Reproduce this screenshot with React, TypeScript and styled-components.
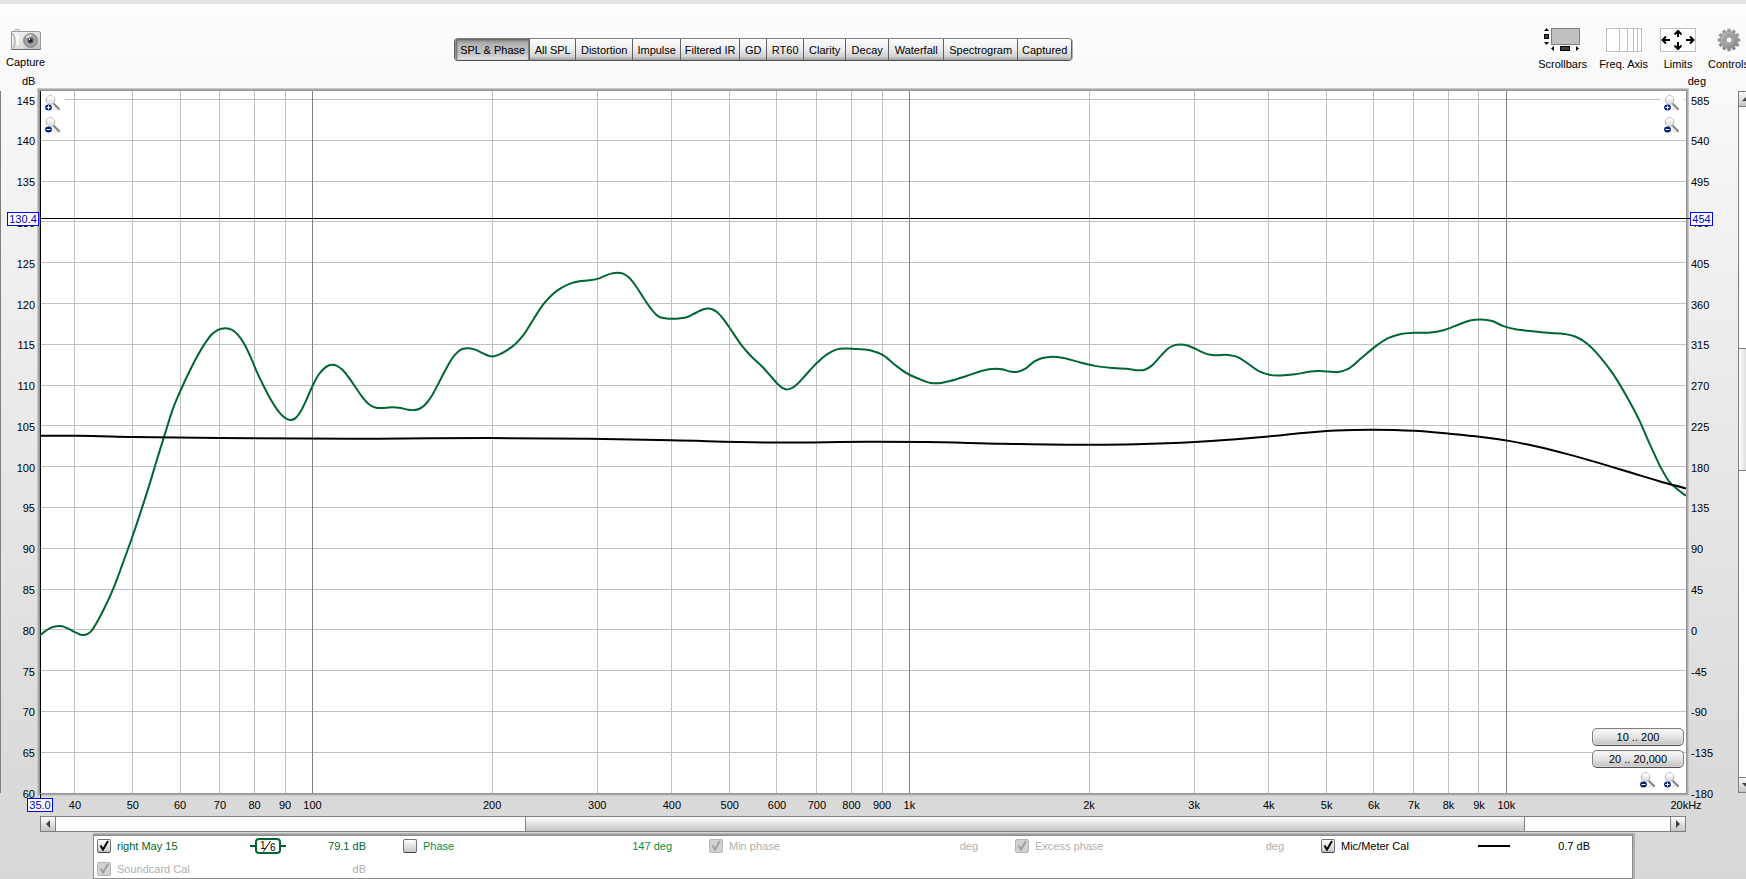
import React from "react";
import styled, { createGlobalStyle, css } from "styled-components";

const GlobalStyle = createGlobalStyle`
  *, *::before, *::after { box-sizing: border-box; }
  html, body { margin: 0; padding: 0; }
  body {
    font: 11px/14px "Liberation Sans", Arial, sans-serif;
    color: #000;
    overflow: hidden;
  }
  button, input { font: inherit; color: inherit; margin: 0; padding: 0; }
`;

/* ---------- scales ---------- */

const F_MIN = 34.96;
const F_MAX = 20000;
const DB_TOP = 146.05;
const DB_BOTTOM = 60;

const freqRatio = (hz: number) => Math.log(hz / F_MIN) / Math.log(F_MAX / F_MIN);
const dbRatio = (db: number) => (DB_TOP - db) / (DB_TOP - DB_BOTTOM);

/* The traces are drawn in view units of the plot. */
const VIEW = { x: 36, y: 162, w: 1478, h: 1254 };

const dbTicks = Array.from({ length: 18 }, (_, i) => 145 - i * 5);
const freqLines = [
  40, 50, 60, 70, 80, 90, 100, 200, 300, 400, 500, 600, 700, 800, 900, 1000, 2000, 3000, 4000,
  5000, 6000, 7000, 8000, 9000, 10000,
];
const freqTicks = [
  ...freqLines.map((hz) => ({ hz, text: hz < 1000 ? `${hz}` : `${hz / 1000}k` })),
  { hz: 20000, text: "20kHz" },
];
const decades = [100, 1000, 10000];

type Point = [number, number];

/* Low band, sampled on a finer raster than the rest of the trace. */
const lowBand: Point[] = [
  [0, 1128], [10, 1116], [20, 1106], [30, 1101], [40, 1100], [50, 1103], [60, 1110], [70, 1118],
  [80, 1125], [88, 1127], [95, 1124], [103, 1115], [113, 1092], [130, 1044], [148, 985],
  [166, 913], [186, 830], [205, 745], [220, 675], [235, 600], [250, 528], [267, 448], [285, 384],
  [300, 336], [315, 292], [332, 250], [345, 224], [358, 210], [373, 205], [386, 210], [398, 225],
  [412, 256], [425, 297], [437, 340], [450, 380], [463, 417], [476, 448], [488, 469], [498, 479],
  [505, 480.5], [513, 476], [522, 460], [535, 422], [548, 378], [560, 345], [572, 325],
  [580, 317], [588, 315], [597, 318], [608, 330], [622, 356], [635, 384], [648, 412], [660, 432],
  [668, 440], [676, 444], [685, 445], [708, 442.5], [725, 445], [740, 450], [752, 451],
  [763, 447], [774, 435], [788, 407], [802, 368], [818, 322], [833, 287], [845, 270], [858, 265],
  [872, 268], [888, 279], [900, 287], [909, 290], [920, 286], [940, 270], [955, 253], [972, 225],
  [992, 178], [1012, 133], [1030, 104], [1048, 84], [1066, 71], [1082, 65], [1105, 61],
  [1122, 56], [1135, 48], [1148, 41], [1160, 38.5], [1172, 41], [1184, 53], [1198, 79],
  [1214, 116], [1228, 146], [1240, 166], [1248, 173], [1256, 175], [1288, 175], [1300, 172],
  [1313, 163], [1326, 153], [1334, 148], [1343, 146], [1352, 149], [1362, 158], [1376, 182],
  [1392, 217], [1410, 256], [1428, 287], [1450, 318], [1470, 351], [1485, 376], [1493, 385],
  [1501, 389], [1510, 386], [1522, 373], [1540, 344], [1560, 312],
];

const highBand: Point[] = [
  [743, 632], [751, 624], [760, 622], [770, 623], [783, 626], [793, 634], [803, 650], [814, 666],
  [825, 676], [835, 683], [843, 684], [853, 680], [868, 671], [880, 663], [888, 659], [894, 658],
  [900, 659], [907, 663], [913, 664], [920, 659], [929, 645], [936, 639], [943, 637], [955, 639],
  [970, 647], [983, 653], [1000, 657], [1015, 659], [1022, 661], [1028, 660], [1034, 653],
  [1042, 636], [1049, 622], [1055, 616], [1060, 615], [1067, 617], [1075, 624], [1084, 632],
  [1091, 634], [1103, 633.5], [1111, 637], [1120, 648], [1131, 663], [1140, 669], [1150, 670],
  [1163, 668], [1174, 664], [1183, 662], [1192, 663], [1202, 664], [1210, 659], [1222, 640],
  [1234, 620], [1246, 604], [1258, 596], [1270, 594], [1285, 593.5], [1297, 589], [1310, 579],
  [1320, 572], [1330, 570], [1340, 573], [1350, 582], [1362, 588], [1376, 591], [1390, 594],
  [1405, 596], [1415, 601], [1425, 613], [1436, 635], [1448, 666], [1460, 705], [1472, 750],
  [1482, 795], [1492, 837], [1499, 860], [1506, 873], [1514, 885],
];

const splTrace: Point[] = [
  ...lowBand.map(([x, y]): Point => [36 + x * 0.4467, 463.8 + y * 0.5946]),
  ...highBand,
];

const calTrace: Point[] = [
  [36, 778], [70, 778], [119, 780], [197, 782], [340, 783], [441, 782], [530, 783], [603, 786],
  [698, 790], [780, 788.5], [830, 789], [900, 792], [980, 794], [1020, 793], [1073, 789],
  [1110, 784], [1139, 779], [1170, 773], [1200, 768.5], [1232, 767], [1270, 769], [1300, 774],
  [1330, 780], [1355, 787], [1380, 797], [1410, 812], [1440, 829], [1465, 844], [1490, 859],
  [1514, 872],
];

/* Cubic Hermite curve through the samples; each slope is that of the parabola
   through a sample and its two neighbours, so uneven spacing stays smooth. */
function smoothPath(points: Point[]): string {
  const last = points.length - 1;
  const chord = (i: number) =>
    (points[i + 1][1] - points[i][1]) / (points[i + 1][0] - points[i][0]);
  const slopes = points.map((p, i) => {
    if (i === 0) return chord(0);
    if (i === last) return chord(last - 1);
    const before = p[0] - points[i - 1][0];
    const after = points[i + 1][0] - p[0];
    return (chord(i - 1) * after + chord(i) * before) / (before + after);
  });
  let d = `M${points[0][0]} ${points[0][1]}`;
  for (let i = 0; i < last; i++) {
    const [x1, y1] = points[i];
    const [x2, y2] = points[i + 1];
    const h = (x2 - x1) / 3;
    d += `C${x1 + h} ${y1 + slopes[i] * h} ${x2 - h} ${y2 - slopes[i + 1] * h} ${x2} ${y2}`;
  }
  return d;
}

/* ---------- frame ---------- */

const Page = styled.div`
  overflow: hidden;
  min-height: 100vh;
  display: flex;
  background: linear-gradient(#fdfdfd, #f0f0f0 30%, #dadada 88%, #d8d8d8);
`;

/* The window runs a little past the right edge of the view. */
const Frame = styled.main`
  flex: none;
  width: calc(100% + 8px);
  display: flex;
  flex-direction: column;
  border-top: 4px solid #e5e5e5;
`;

const Header = styled.header`
  display: flex;
  align-items: flex-start;
  height: 69px;
  padding: 24px 5px 0 6px;
`;

const ToolButton = styled.button`
  display: flex;
  flex-direction: column;
  align-items: center;
  gap: 5px;
  border: 0;
  background: none;
  white-space: nowrap;
  svg { display: block; }
`;

const Tools = styled.div`
  display: flex;
  gap: 12px;
`;

const TabArea = styled.nav`
  flex: 1;
  display: flex;
  justify-content: center;
  padding: 10px 57px 0 0;
`;

const TabGroup = styled.div`
  display: flex;
  height: 23px;
  border: 1px solid #606060;
  border-top-color: #808080;
  border-bottom-color: #505050;
  border-radius: 4px;
  overflow: hidden;
  box-shadow: 1px 0 0 #b0b0b0;
`;

const Tab = styled.button<{ $active?: boolean; $width: number }>`
  width: ${(p) => p.$width}px;
  border: 0;
  border-left: 1px solid #606060;
  white-space: nowrap;
  background: linear-gradient(#fdfdfd, #ececec 50%, #cfcfcf 85%, #9a9a9a);
  &:first-child { border-left-color: #909090; }
  ${(p) =>
    p.$active &&
    css`
      background: linear-gradient(#8a8a8a, #b4b4b4 25%, #c4c4c4 70%, #e6e6e6);
      box-shadow: inset 1px 1px 2px #606060, inset -1px 0 1px #808080;
    `}
`;

const Units = styled.div`
  display: flex;
  justify-content: space-between;
  height: 18px;
  line-height: 16px;
  padding: 0 48px 0 22px;
`;

/* ---------- chart ---------- */

const Chart = styled.section`
  flex: 1;
  display: grid;
  grid-template-columns: 40px minmax(0, 1fr) 52px 16px;
  grid-template-rows: minmax(400px, 1fr) 23px 16px;
`;

const Scale = styled.div<{ $side: "left" | "right" }>`
  position: relative;
  ${(p) => p.$side === "left" && css`border-left: 1px solid #808080;`}
`;

const ScaleTick = styled.span<{ $side: "left" | "right" }>`
  position: absolute;
  ${(p) => (p.$side === "left" ? "right: 5px;" : "left: 5px;")}
  line-height: 14px;
  margin-top: 1px;
  transform: translateY(-50%);
  white-space: nowrap;
`;

const readout = css`
  position: absolute;
  z-index: 2;
  height: 14px;
  line-height: 12px;
  border: 1px solid #0000ff;
  background: #fff;
  color: #0000cc;
  text-align: center;
`;

const LevelReadout = styled.output<{ $side: "left" | "right" }>`
  ${readout}
  ${(p) => (p.$side === "left" ? "right: 1px; width: 32px;" : "left: 4px; width: 23px;")}
  transform: translateY(-50%);
`;

const FreqReadout = styled.output`
  ${readout}
  left: 0;
  top: 5px;
  width: 26px;
  transform: translateX(-50%);
  &::before {
    content: "";
    position: absolute;
    left: 50%;
    bottom: 100%;
    height: 5px;
    border-left: 1px solid #000;
  }
`;

const Plot = styled.div`
  position: relative;
  z-index: 1;
  min-width: 0;
  background: #fff;
  box-shadow: inset 1px 0 0 #000, 0 0 0 1px #969696, 0 0 0 2px #a8a8a8, 0 0 0 3px #c8c8c8;
`;

const PlotDrawing = styled.svg`
  position: absolute;
  inset: 0;
  width: 100%;
  height: 100%;
  path, line { vector-effect: non-scaling-stroke; fill: none; }
  line { shape-rendering: crispEdges; }
`;

const CursorLine = styled.div`
  position: absolute;
  left: 0;
  right: -4px;
  margin-top: -1px;
  border-top: 1px solid #000;
`;

const Corner = styled.div<{ $at: "topLeft" | "topRight" | "bottomRight" }>`
  position: absolute;
  display: flex;
  flex-direction: column;
  align-items: flex-end;
  ${(p) => p.$at === "topLeft" && "left: 1px; top: 1px;"}
  ${(p) => p.$at === "topRight" && "right: 2px; top: 1px;"}
  ${(p) => p.$at === "bottomRight" && "right: 2px; bottom: 5px; gap: 4px;"}
`;

const ZoomRow = styled.div`
  display: flex;
  height: 16px;
`;

const ZoomButton = styled.button`
  display: grid;
  place-items: center;
  width: 24px;
  height: 22px;
  border: 0;
  background: #fff;
  ${ZoomRow} & { height: 16px; }
  svg { display: block; }
`;

const RangeButton = styled.button`
  width: 92px;
  height: 18px;
  border: 1px solid #808080;
  border-bottom-color: #505050;
  border-radius: 5px;
  background: linear-gradient(#fafafa, #e4e4e4 50%, #c0c0c0);
  box-shadow: inset 0 0 0 1px #e8e8e880;
`;

const FreqScale = styled.div`
  grid-column: 2;
  position: relative;
`;

const FreqTick = styled.span`
  position: absolute;
  top: 5px;
  transform: translateX(-50%);
  white-space: nowrap;
`;

/* ---------- scroll bars ---------- */

const HScroll = styled.div`
  grid-column: 2;
  display: grid;
  grid-template-columns: 15px minmax(0, 1fr) 15px;
  border: 1px solid #808080;
  background: #fff;
`;

const VScroll = styled.div`
  grid-column: 4;
  grid-row: 1;
  display: grid;
  grid-template-rows: 15px minmax(0, 1fr) 15px;
  border: 1px solid #808080;
  background: #fff;
`;

const ScrollButton = styled.button`
  display: grid;
  place-items: center;
  border: 0 solid #808080;
  background: linear-gradient(#fdfdfd, #c4c4c4);
  ${HScroll} &:first-child { border-right-width: 1px; }
  ${HScroll} &:last-child { border-left-width: 1px; }
  ${VScroll} &:first-child { border-bottom-width: 1px; }
  ${VScroll} &:last-child { border-top-width: 1px; }
  svg { display: block; }
`;

const HTrack = styled.div`
  display: grid;
  grid-template-columns: 469fr 1000fr 145fr;
`;

const HThumb = styled.div`
  grid-column: 2;
  border: 0 solid #808080;
  border-width: 0 1px;
  background: linear-gradient(#fdfdfd, #c4c4c4);
`;

const VTrack = styled.div`
  display: grid;
  grid-template-rows: 241fr 123fr 306fr;
`;

const VThumb = styled.div`
  grid-row: 2;
  border: 0 solid #808080;
  border-width: 1px 0;
  background: linear-gradient(90deg, #fdfdfd, #c4c4c4);
`;

/* ---------- legend ---------- */

const Legend = styled.section`
  display: grid;
  grid-template-columns: repeat(5, minmax(0, 1fr));
  grid-auto-rows: 18px;
  row-gap: 5px;
  margin: 4px 122px 1px 94px;
  padding: 0 5px 1px 3px;
  background: #fff;
  box-shadow: 0 0 0 1px #8c8c8c, 0 -1px 0 1px #a0a0a0, 1px -1px 0 2px #b0b0b0;
`;

const LegendItem = styled.div<{ $color: string }>`
  display: grid;
  grid-template-columns: minmax(0, 1fr) 36px 80px;
  align-items: center;
  padding: 1px 37px 0 0;
  color: ${(p) => p.$color};
  white-space: nowrap;
`;

const TraceLabel = styled.label`
  display: flex;
  align-items: center;
  gap: 6px;
`;

const CheckWrap = styled.span`
  display: grid;
  width: 14px;
  height: 14px;
  > * { grid-area: 1 / 1; }
  svg { pointer-events: none; z-index: 1; }
`;

const Check = styled.input`
  appearance: none;
  width: 14px;
  height: 14px;
  border: 1px solid #707078;
  border-bottom-color: #404048;
  border-radius: 2px;
  background: linear-gradient(#ffffff, #c6c6c6);
  &:disabled {
    border-color: #b4b4bc;
    background: #d2d2d2;
  }
`;

const Swatch = styled.span`
  display: flex;
  justify-content: flex-end;
  grid-column: 2;
  svg { display: block; }
`;

const Value = styled.span`
  grid-column: 3;
  text-align: right;
`;

/* ---------- drawings ---------- */

const CameraIcon = () => (
  <svg width="30" height="22" viewBox="0 0 30 22" aria-hidden="true">
    <defs>
      <linearGradient id="camBody" x1="0" y1="0" x2="1" y2="1">
        <stop offset="0" stopColor="#fafafa" />
        <stop offset=".6" stopColor="#dcdcdc" />
        <stop offset="1" stopColor="#b8b8b8" />
      </linearGradient>
      <radialGradient id="camLens">
        <stop offset="0" stopColor="#5a6068" />
        <stop offset=".4" stopColor="#8a8a8a" />
        <stop offset=".7" stopColor="#b0b0b0" />
        <stop offset="1" stopColor="#777" />
      </radialGradient>
    </defs>
    <rect x="3.500" y="1.500" width="5" height="3" rx="1" fill="#eee" stroke="#aaa" />
    <path d="M.5 3.500H27L29.500 4V21.500H.5Z" fill="url(#camBody)" stroke="#9a9a9a" />
    <path d="M1 21.500H29.500" stroke="#6c6c6c" />
    <path d="M1.500 5Q6 12 2.500 20.500" fill="none" stroke="#b4b4b4" strokeWidth="1.500" />
    <path d="M6.500 7V17" stroke="#fff" strokeWidth="2" />
    <circle cx="19.500" cy="12.500" r="7" fill="url(#camLens)" stroke="#8c8c8c" strokeWidth=".8" />
    <path d="M14 9A6.500 6.500 0 0 1 21 6.500L19.500 11Z" fill="#e4e4e4" opacity=".7" />
    <circle cx="19.500" cy="12.500" r="3" fill="#55595f" />
    <circle cx="19.500" cy="12.500" r="1.500" fill="#0c1440" />
    <circle cx="18.500" cy="11.500" r=".7" fill="#fff" />
  </svg>
);

const ScrollbarsIcon = () => (
  <svg width="37" height="24" viewBox="0 0 37 24" aria-hidden="true">
    <rect x="7.500" y=".5" width="28" height="16" fill="#c0c0c0" stroke="#808080" />
    <path d="M2.500 0L5 3H0ZM0 14H5L2.500 17ZM7 20.500L10 18V23ZM35 20.500L32 18V23Z" />
    <rect x=".5" y="6.500" width="4" height="4" fill="#404040" stroke="#000" />
    <rect x="16.500" y="18.500" width="9" height="4" fill="#404040" stroke="#000" />
  </svg>
);

const FreqAxisIcon = () => (
  <svg width="36" height="24" viewBox="0 0 36 24" aria-hidden="true">
    <rect x=".5" y=".5" width="35" height="23" fill="#fff" stroke="#c0c0c0" />
    <path d="M13.500 0V24M21.500 0V24M27.500 0V24M31.500 0V24" stroke="#c0c0c0" />
  </svg>
);

const LimitsIcon = () => (
  <svg width="36" height="24" viewBox="0 0 36 24" aria-hidden="true">
    <rect x=".5" y=".5" width="35" height="23" fill="#fff" stroke="#c0c0c0" />
    <path
      d="M18 9V3M14.500 6.500L18 3L21.500 6.500M18 14V21M14.500 17.500L18 21L21.500 17.500M10 12H3M6 8.500L2.500 12L6 15.500M26 12H33M30 8.500L33.500 12L30 15.500"
      fill="none"
      stroke="#000"
      strokeWidth="2"
    />
  </svg>
);

const GearIcon = () => (
  <svg width="24" height="24" viewBox="-12 -12 24 24" aria-hidden="true">
    <defs>
      <linearGradient id="gear" x1="0" y1="0" x2="1" y2="1">
        <stop offset="0" stopColor="#c8c8c8" />
        <stop offset=".5" stopColor="#a4a4a4" />
        <stop offset="1" stopColor="#808080" />
      </linearGradient>
    </defs>
    {Array.from({ length: 12 }, (_, i) => (
      <rect
        key={i}
        x="-1.500"
        y="-11"
        width="3"
        height="5"
        rx="1"
        fill={i > 3 && i < 9 ? "#8c8c8c" : "#a0a0a0"}
        stroke="#7c7c7c"
        strokeWidth=".5"
        transform={`rotate(${i * 30})`}
      />
    ))}
    <circle r="8.500" fill="url(#gear)" stroke="#8a8a8a" strokeWidth=".6" />
    <circle r="5.500" fill="#b8b8b8" stroke="#8c8c8c" />
    <circle r="3.500" fill="#e0e0e0" stroke="#7a7a7a" />
    <circle r="2" fill="#fff" />
  </svg>
);

const ZoomIcon = ({ plus }: { plus?: boolean }) => (
  <svg width="16" height="16" viewBox="0 0 16 16" aria-hidden="true">
    <path d="M7 15.500L10 10L15.500 15.500Z" fill="#ececec" />
    <path d="M8.500 8.500L14.500 15" stroke="#d8d8d8" strokeWidth="3" />
    <path d="M8.500 8.500L14.500 14.500" stroke="#707070" strokeWidth="1.400" />
    <circle cx="5.500" cy="5" r="4.300" fill="#e8e8ec" stroke="#b0b0b0" />
    <path d="M2 4.500A3.500 3.500 0 0 1 9 4.500Z" fill="#fff" />
    <ellipse cx="3.500" cy="12.500" rx="3.400" ry="3" fill="#002080" />
    <path d={plus ? "M1.500 12.500H5.500M3.500 10.500V14.500" : "M1.500 12.500H5.500"} stroke="#fff" />
  </svg>
);

const Arrow = ({ dir }: { dir: "left" | "right" | "up" | "down" }) => {
  const shapes = {
    left: "M6 0V8L2 4Z",
    right: "M2 0V8L6 4Z",
    up: "M0 6H8L4 2Z",
    down: "M0 2H8L4 6Z",
  };
  return (
    <svg width="8" height="8" viewBox="0 0 8 8" aria-hidden="true">
      <path d={shapes[dir]} fill="#404040" />
    </svg>
  );
};

const SmoothingMark = () => (
  <svg width="36" height="16" viewBox="0 0 36 16" aria-label="1/6 octave smoothing">
    <path d="M0 8H5M31 8H36" stroke="#006633" strokeWidth="2" />
    <rect x="6" y="1" width="24" height="14" rx="3" fill="#fff" stroke="#006633" strokeWidth="2" />
    <path d="M13.500 13.500L20.500 3" stroke="#000" />
    <text x="10" y="11" fontSize="10" fill="#000">1</text>
    <text x="20" y="13" fontSize="10" fill="#000">6</text>
  </svg>
);

const LineMark = () => (
  <svg width="32" height="2" viewBox="0 0 32 2" aria-hidden="true">
    <rect width="32" height="2" fill="#000" />
  </svg>
);

/* ---------- page ---------- */

const tabs: { name: string; width: number }[] = [
  { name: "SPL & Phase", width: 74 },
  { name: "All SPL", width: 46 },
  { name: "Distortion", width: 57 },
  { name: "Impulse", width: 48 },
  { name: "Filtered IR", width: 59 },
  { name: "GD", width: 27 },
  { name: "RT60", width: 37 },
  { name: "Clarity", width: 42 },
  { name: "Decay", width: 43 },
  { name: "Waterfall", width: 55 },
  { name: "Spectrogram", width: 74 },
  { name: "Captured", width: 54 },
];

interface Trace {
  name: string;
  value: string;
  color: string;
  checked?: boolean;
  disabled?: boolean;
  mark?: React.ReactNode;
}

const GREY = "#b0b0b0";
const traces: Trace[] = [
  { name: "right May 15", value: "79.1 dB", color: "#006633", checked: true, mark: <SmoothingMark /> },
  { name: "Phase", value: "147 deg", color: "#009245" },
  { name: "Min phase", value: "deg", color: GREY, checked: true, disabled: true },
  { name: "Excess phase", value: "deg", color: GREY, checked: true, disabled: true },
  { name: "Mic/Meter Cal", value: "0.7 dB", color: "#000", checked: true, mark: <LineMark /> },
  { name: "Soundcard Cal", value: "dB", color: GREY, checked: true, disabled: true },
];

const CURSOR_DB = 130.4;
const percent = (ratio: number) => `${ratio * 100}%`;

function TraceEntry({ trace }: { trace: Trace }) {
  const [on, setOn] = React.useState(!!trace.checked);
  return (
    <LegendItem $color={trace.color}>
      <TraceLabel>
        <CheckWrap>
          <Check
            type="checkbox"
            checked={on}
            disabled={trace.disabled}
            onChange={(e) => setOn(e.target.checked)}
          />
          {on && (
            <svg width="14" height="14" viewBox="0 0 14 14" aria-hidden="true">
              <path
                d="M3.500 6.500L6 10.500L11 2"
                fill="none"
                stroke={trace.disabled ? "#a0a0a0" : "#000"}
                strokeWidth="2"
              />
            </svg>
          )}
        </CheckWrap>
        {trace.name}
      </TraceLabel>
      {trace.mark && <Swatch>{trace.mark}</Swatch>}
      <Value>{trace.value}</Value>
    </LegendItem>
  );
}

const ZoomPair = () => (
  <>
    <ZoomButton aria-label="Zoom in vertically"><ZoomIcon plus /></ZoomButton>
    <ZoomButton aria-label="Zoom out vertically"><ZoomIcon /></ZoomButton>
  </>
);

export default function App() {
  const [tab, setTab] = React.useState(tabs[0].name);
  return (
    <Page>
      <GlobalStyle />
      <Frame>
        <Header>
          <ToolButton><CameraIcon />Capture</ToolButton>
          <TabArea>
            <TabGroup>
              {tabs.map(({ name, width }) => (
                <Tab key={name} $width={width} $active={name === tab} onClick={() => setTab(name)}>
                  {name}
                </Tab>
              ))}
            </TabGroup>
          </TabArea>
          <Tools>
            <ToolButton><ScrollbarsIcon />Scrollbars</ToolButton>
            <ToolButton><FreqAxisIcon />Freq. Axis</ToolButton>
            <ToolButton><LimitsIcon />Limits</ToolButton>
            <ToolButton><GearIcon />Controls</ToolButton>
          </Tools>
        </Header>
        <Units>
          <span>dB</span>
          <span>deg</span>
        </Units>
        <Chart>
          <Scale $side="left">
            {dbTicks.map((db) => (
              <ScaleTick key={db} $side="left" style={{ top: percent(dbRatio(db)) }}>{db}</ScaleTick>
            ))}
            <LevelReadout $side="left" style={{ top: percent(dbRatio(CURSOR_DB)) }}>130.4</LevelReadout>
          </Scale>
          <Plot>
            <PlotDrawing
              viewBox={`${VIEW.x} ${VIEW.y} ${VIEW.w} ${VIEW.h}`}
              preserveAspectRatio="none"
              role="img"
              aria-label="SPL against frequency"
            >
              {dbTicks.map((db) => {
                const y = VIEW.y + dbRatio(db) * VIEW.h;
                return (
                  <line key={db} x1={VIEW.x + 1} x2={VIEW.x + VIEW.w} y1={y} y2={y} stroke="#c0c0c0" />
                );
              })}
              {freqLines.map((hz) => {
                const x = VIEW.x + freqRatio(hz) * VIEW.w;
                return (
                  <line
                    key={hz}
                    x1={x}
                    x2={x}
                    y1={VIEW.y}
                    y2={VIEW.y + VIEW.h}
                    stroke={decades.includes(hz) ? "#808080" : "#c0c0c0"}
                  />
                );
              })}
              <path d={smoothPath(splTrace)} stroke="#006633" strokeWidth="2" />
              <path d={smoothPath(calTrace)} stroke="#000" strokeWidth="2" />
            </PlotDrawing>
            <CursorLine style={{ top: percent(dbRatio(CURSOR_DB)) }} />
            <Corner $at="topLeft"><ZoomPair /></Corner>
            <Corner $at="topRight"><ZoomPair /></Corner>
            <Corner $at="bottomRight">
              <RangeButton>10 .. 200</RangeButton>
              <RangeButton>20 .. 20,000</RangeButton>
              <ZoomRow>
                <ZoomButton aria-label="Zoom out horizontally"><ZoomIcon /></ZoomButton>
                <ZoomButton aria-label="Zoom in horizontally"><ZoomIcon plus /></ZoomButton>
              </ZoomRow>
            </Corner>
          </Plot>
          <Scale $side="right">
            {dbTicks.map((db) => (
              <ScaleTick key={db} $side="right" style={{ top: percent(dbRatio(db)) }}>
                {(db - 80) * 9}
              </ScaleTick>
            ))}
            <LevelReadout $side="right" style={{ top: percent(dbRatio(CURSOR_DB)) }}>454</LevelReadout>
          </Scale>
          <VScroll>
            <ScrollButton aria-label="Scroll up"><Arrow dir="up" /></ScrollButton>
            <VTrack><VThumb /></VTrack>
            <ScrollButton aria-label="Scroll down"><Arrow dir="down" /></ScrollButton>
          </VScroll>
          <FreqScale>
            {freqTicks.map(({ hz, text }) => (
              <FreqTick key={hz} style={{ left: percent(freqRatio(hz)) }}>{text}</FreqTick>
            ))}
            <FreqReadout>35.0</FreqReadout>
          </FreqScale>
          <HScroll>
            <ScrollButton aria-label="Scroll left"><Arrow dir="left" /></ScrollButton>
            <HTrack><HThumb /></HTrack>
            <ScrollButton aria-label="Scroll right"><Arrow dir="right" /></ScrollButton>
          </HScroll>
        </Chart>
        <Legend>
          {traces.map((trace) => (
            <TraceEntry key={trace.name} trace={trace} />
          ))}
        </Legend>
      </Frame>
    </Page>
  );
}
